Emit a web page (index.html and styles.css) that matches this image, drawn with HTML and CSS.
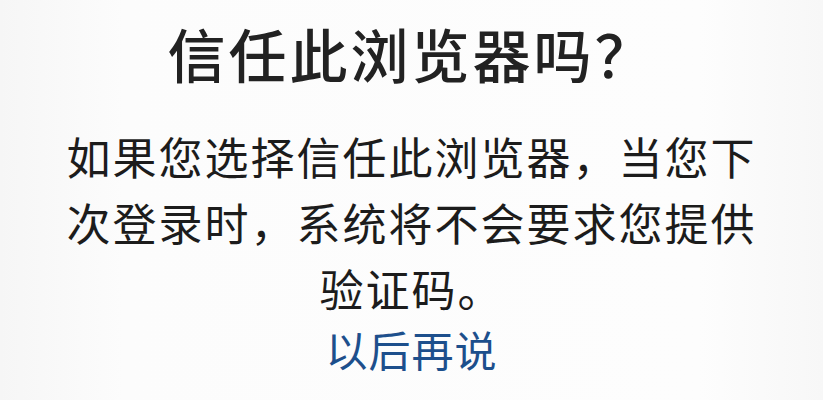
FILE: index.html
```html
<!DOCTYPE html>
<html lang="zh-CN">
<head>
<meta charset="utf-8">
<link rel="stylesheet" href="styles.css">
</head>
<body>
<div class="dialog">
  <h1 class="title">信任此浏览器吗？</h1>
  <p class="message">如果您选择信任此浏览器，当您下次登录时，系统将不会要求您提供验证码。</p>
  <a class="later">以后再说</a>
</div>
</body>
</html>
```
FILE: styles.css
```css
html, body {
  margin: 0;
  padding: 0;
}
body {
  width: 823px;
  height: 400px;
  overflow: hidden;
  background: linear-gradient(90deg, #f6f6f6 0%, #fcfcfc 15%, #fdfdfd 85%, #f7f7f7 100%);
  font-family: "Noto Sans CJK SC", "Noto Sans", sans-serif;
  color: #1c1c1c;
}
.dialog {
  display: flex;
  flex-direction: column;
  align-items: center;
  padding-top: 17px;
}
.title {
  margin: 0;
  font-size: 58px;
  line-height: 72px;
  font-weight: 500;
  letter-spacing: 3px;
  color: #222222;
}
.message {
  margin: 34px 0 0;
  width: 700px;
  font-size: 44px;
  line-height: 66px;
  letter-spacing: 2px;
  text-align: center;
  font-weight: 400;
}
.later {
  display: block;
  margin-top: -2px;
  font-size: 42px;
  line-height: 60px;
  letter-spacing: 1px;
  color: #1d4f8c;
}
```
